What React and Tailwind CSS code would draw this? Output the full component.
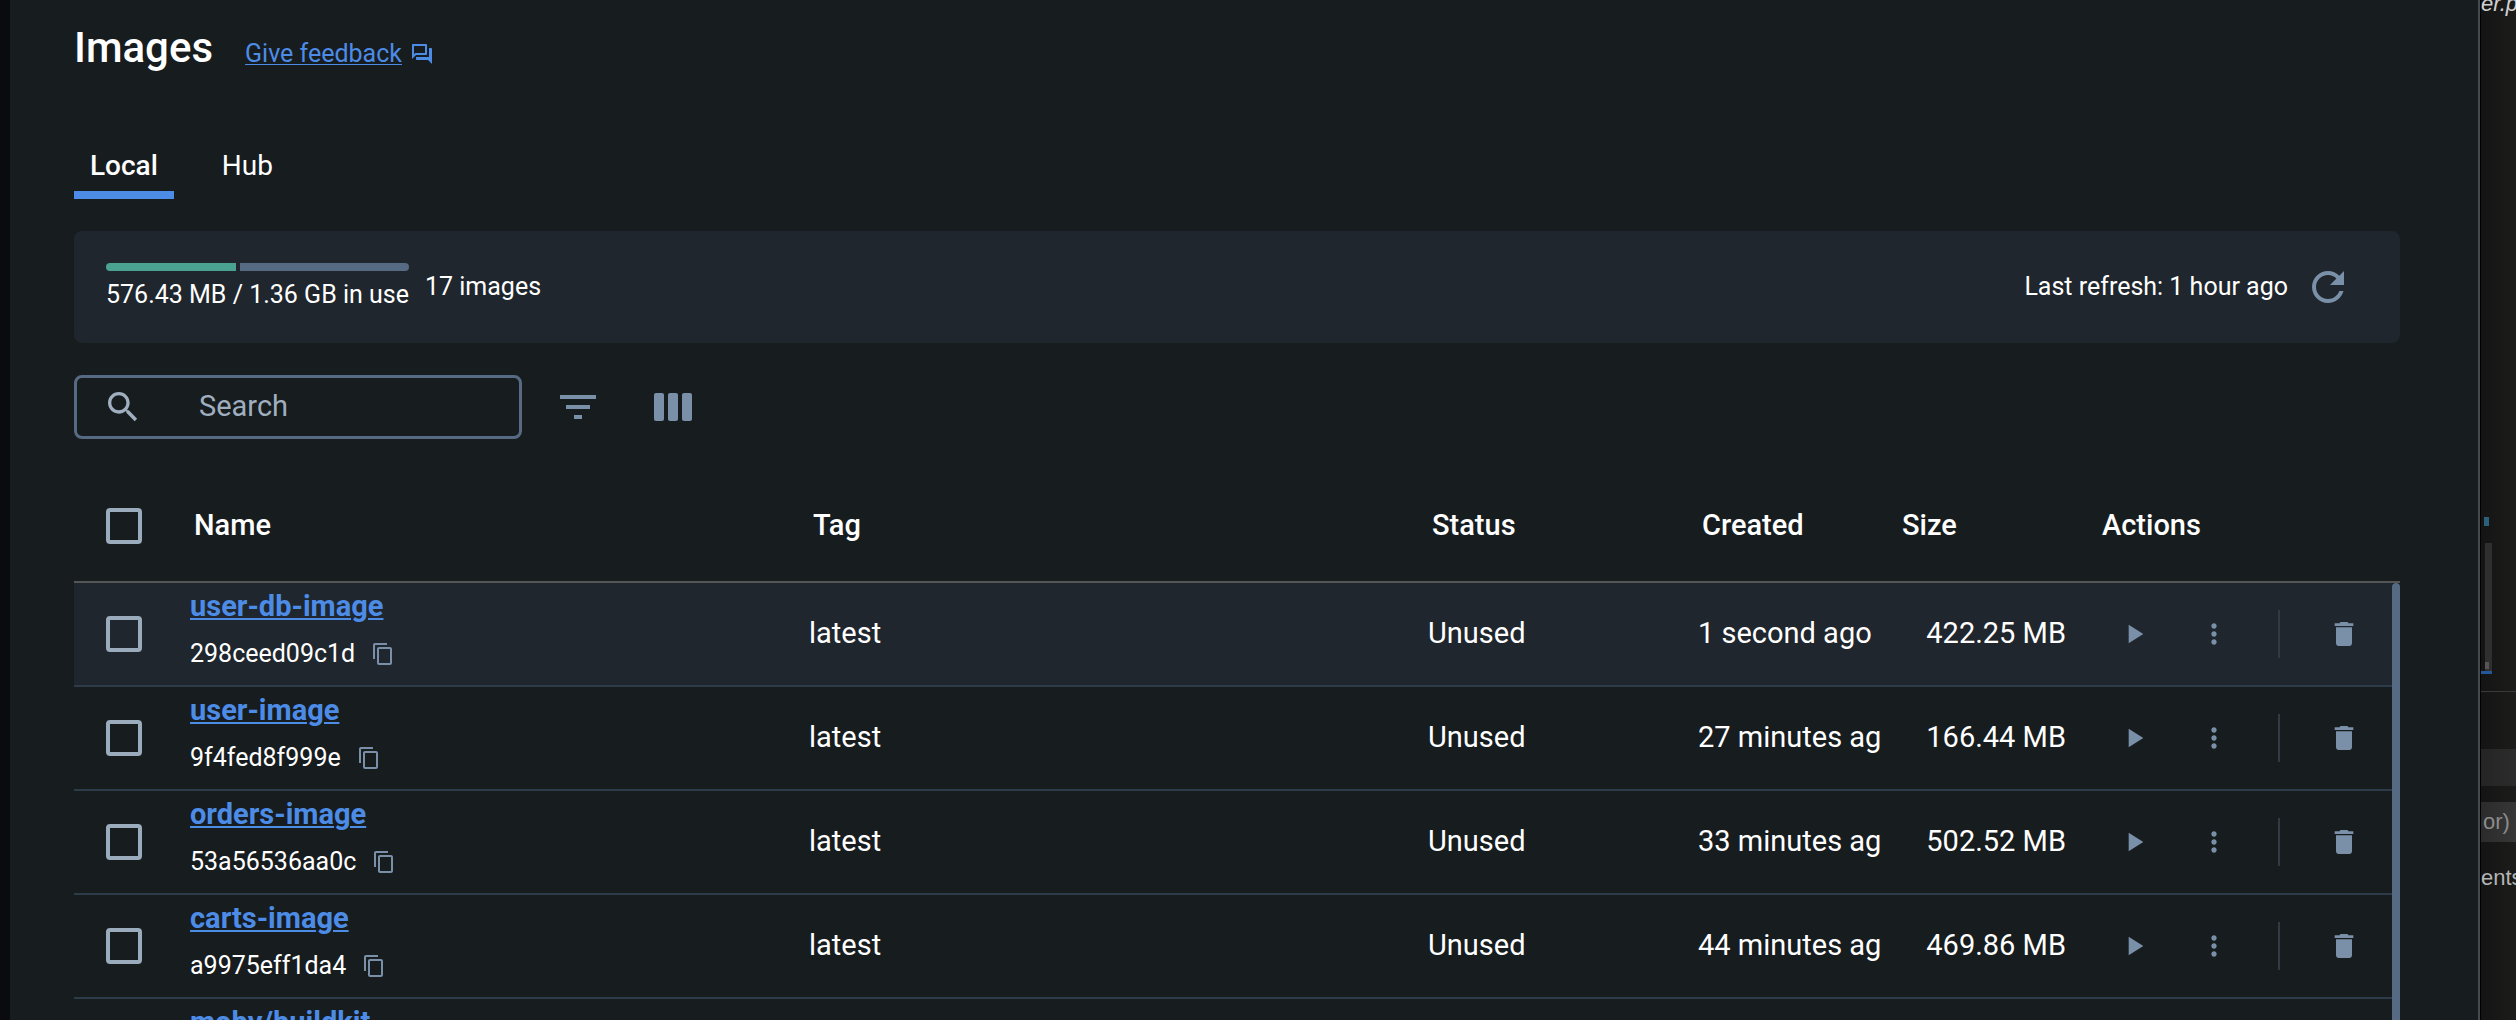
const rows = [
  { name: "user-db-image", id: "298ceed09c1d", created: "1 second ago", size: "422.25 MB", selected: true },
  { name: "user-image", id: "9f4fed8f999e", created: "27 minutes ag", size: "166.44 MB" },
  { name: "orders-image", id: "53a56536aa0c", created: "33 minutes ag", size: "502.52 MB" },
  { name: "carts-image", id: "a9975eff1da4", created: "44 minutes ag", size: "469.86 MB" },
  { name: "moby/buildkit" },
];

function Icon({ d, className }) {
  return (
    <svg viewBox="0 0 24 24" fill="currentColor" aria-hidden="true" className={className}>
      <path d={d} />
    </svg>
  );
}

const paths = {
  feedback:
    "M15 4v7H5.17L4 12.17V4h11m1-2H3c-.55 0-1 .45-1 1v14l4-4h10c.55 0 1-.45 1-1V3c0-.55-.45-1-1-1zm5 4h-2v9H6v2c0 .55.45 1 1 1h11l4 4V7c0-.55-.45-1-1-1z",
  refresh:
    "M17.65 6.35C16.2 4.9 14.21 4 12 4c-4.42 0-7.99 3.58-7.99 8s3.57 8 7.99 8c3.73 0 6.84-2.55 7.73-6h-2.08c-.82 2.33-3.04 4-5.65 4-3.31 0-6-2.69-6-6s2.69-6 6-6c1.66 0 3.14.69 4.22 1.78L13 11h7V4l-2.35 2.35z",
  search:
    "M15.5 14h-.79l-.28-.27C15.41 12.59 16 11.11 16 9.5 16 5.91 13.09 3 9.5 3S3 5.91 3 9.5 5.91 16 9.5 16c1.61 0 3.09-.59 4.23-1.57l.27.28v.79l5 4.99L20.49 19l-4.99-5zm-6 0C7.01 14 5 11.99 5 9.5S7.01 5 9.5 5 14 7.01 14 9.5 11.99 14 9.5 14z",
  filter: "M10 18h4v-2h-4v2zM3 6v2h18V6H3zm3 7h12v-2H6v2z",
  copy: "M16 1H4c-1.1 0-2 .9-2 2v14h2V3h12V1zm3 4H8c-1.1 0-2 .9-2 2v14c0 1.1.9 2 2 2h11c1.1 0 2-.9 2-2V7c0-1.1-.9-2-2-2zm0 16H8V7h11v14z",
  play: "M8 5v14l11-7z",
  more: "M12 8c1.1 0 2-.9 2-2s-.9-2-2-2-2 .9-2 2 .9 2 2 2zm0 2c-1.1 0-2 .9-2 2s.9 2 2 2 2-.9 2-2-.9-2-2-2zm0 6c-1.1 0-2 .9-2 2s.9 2 2 2 2-.9 2-2-.9-2-2-2z",
  trash: "M6 19c0 1.1.9 2 2 2h8c1.1 0 2-.9 2-2V7H6v12zM19 4h-3.5l-1-1h-5l-1 1H5v2h14V4z",
};

function ColumnsIcon() {
  return (
    <svg viewBox="0 0 48 48" fill="currentColor" aria-hidden="true" className="size-12">
      <rect x="4" y="10" width="10" height="28" rx="2" />
      <rect x="18" y="10" width="10" height="28" rx="2" />
      <rect x="32" y="10" width="10" height="28" rx="2" />
    </svg>
  );
}

function Checkbox({ label }) {
  return (
    <input
      type="checkbox"
      aria-label={label}
      className="block size-9 appearance-none rounded border-4 border-[#9aabbb] checked:bg-[#4d8ce6]"
    />
  );
}

function RowActions({ name }) {
  return (
    <div className="flex items-center gap-12 text-[#7a90a9]">
      <button type="button" aria-label={"Run " + name}>
        <Icon d={paths.play} className="size-8" />
      </button>
      <button type="button" aria-label={"More actions for " + name}>
        <Icon d={paths.more} className="size-8" />
      </button>
      <span className="h-12 w-0.5 bg-[#323a42]" />
      <button type="button" aria-label={"Delete " + name}>
        <Icon d={paths.trash} className="size-8" />
      </button>
    </div>
  );
}

function ImageRow({ row, first }) {
  return (
    <tr className={row.selected ? "bg-[#1f262d]" : ""}>
      <td className="h-[104px] border-b-2 border-[#2d3b4b] pl-8">
        {row.id && <Checkbox label={"Select " + row.name} />}
      </td>
      <td className="border-b-2 border-[#2d3b4b] px-4 align-top">
        <a
          href="#image"
          className="block w-fit leading-[46px] font-bold text-[#4d8ce6] underline decoration-2 underline-offset-2"
        >
          {row.name}
        </a>
        {row.id && (
          <div className="flex items-center gap-4 pt-[11px] text-[25px] leading-7">
            {row.id}
            <button type="button" aria-label={"Copy id of " + row.name} className="text-[#7a90a9]">
              <Icon d={paths.copy} className="size-6" />
            </button>
          </div>
        )}
      </td>
      <td className="border-b-2 border-[#2d3b4b] px-4">{row.id && "latest"}</td>
      <td className="border-b-2 border-[#2d3b4b] px-4">{row.id && "Unused"}</td>
      <td className="border-b-2 border-[#2d3b4b] pl-4 whitespace-nowrap">{row.created}</td>
      <td className="border-b-2 border-[#2d3b4b] px-4 text-right whitespace-nowrap">{row.size}</td>
      <td className="border-b-2 border-[#2d3b4b] pl-9">{row.id && <RowActions name={row.name} />}</td>
      {first && (
        <td rowSpan={rows.length} className="bg-[#171c1f] p-0 align-top">
          <div className="h-[520px] rounded-t bg-[#566b83]" />
        </td>
      )}
    </tr>
  );
}

function BackgroundWindow() {
  return (
    <aside className="flex w-9 shrink-0 flex-col overflow-hidden border-l border-black bg-linear-to-r from-[#141414] to-[#1c1c1b] font-['Liberation_Sans',sans-serif] text-[22px] whitespace-nowrap">
      <div className="-mt-3 h-9 leading-8 text-[#d0d0d0] italic">er.p</div>
      <div className="mt-[493px] ml-[3px] h-[9px] w-[5px] bg-[#2c5f7c]" />
      <div className="mt-[17px] ml-1 flex h-32 w-[7px] items-end bg-[#2f2f2f] pb-0.5">
        <div className="h-[7px] w-1 bg-[#555]" />
      </div>
      <div className="h-[3px] w-[11px] bg-[#24579a]" />
      <div className="mt-[17px] h-px bg-[#3a3a3a]" />
      <div className="mt-[57px] h-[37px] bg-linear-to-r from-[#242424] to-[#2c2c2c]" />
      <div className="mt-4 h-10 bg-linear-to-r from-[#2b2b2b] to-[#373737] pl-0.5 leading-10 text-[#8b8b8b]">or)</div>
      <div className="mt-4 leading-10 text-[#b4b4b4]">ents</div>
    </aside>
  );
}

export default function App() {
  return (
    <div className="flex h-screen overflow-hidden bg-[#090b0e] pl-2.5 font-[Roboto,sans-serif] text-white">
      <main className="min-w-0 flex-1 border-r-2 border-[#444a4d] bg-[#171c1f] pr-[78px] pl-16">
        <header className="flex items-baseline gap-8 pt-5">
          <h1 className="text-[42px] leading-[56px] font-medium">Images</h1>
          <a href="#feedback" className="flex items-center gap-2 text-[25px] leading-8 text-[#4d8ce6]">
            <span className="underline decoration-1 underline-offset-2">Give feedback</span>
            <Icon d={paths.feedback} className="size-6" />
          </a>
        </header>

        <nav role="tablist" className="mt-[59px] flex text-[28px]">
          <button
            type="button"
            role="tab"
            aria-selected="true"
            className="h-16 border-b-8 border-[#4d8ce6] px-4 pt-1.5 leading-8 font-medium"
          >
            Local
          </button>
          <button
            type="button"
            role="tab"
            aria-selected="false"
            className="ml-8 h-16 border-b-8 border-transparent px-4 pt-1.5 leading-8"
          >
            Hub
          </button>
        </nav>

        <section className="mt-8 flex h-28 items-center rounded-lg bg-[#1f262d] pr-12 pl-8 text-[25px]">
          <div>
            <div className="flex h-2 gap-1 overflow-hidden rounded-full">
              <div className="w-[43%] bg-[#4aa391]" />
              <div className="flex-1 bg-[#566b83]" />
            </div>
            <p className="pt-2 leading-8">576.43 MB / 1.36 GB in use</p>
          </div>
          <p className="ml-4">17 images</p>
          <p className="ml-auto">Last refresh: 1 hour ago</p>
          <button type="button" aria-label="Refresh" className="ml-4 text-[#7a90a9]">
            <Icon d={paths.refresh} className="size-12" />
          </button>
        </section>

        <div className="mt-8 flex items-center text-[#7a90a9]">
          <label className="flex h-16 w-[448px] items-center rounded-lg border-[3px] border-[#566b83] pl-[26px] text-[#a0afbf]">
            <Icon d={paths.search} className="size-10 shrink-0" />
            <input
              type="text"
              aria-label="Search"
              placeholder="Search"
              className="ml-14 min-w-0 flex-1 bg-transparent text-[29px] outline-none placeholder:text-[#a0afbf]"
            />
          </label>
          <button type="button" aria-label="Filter" className="ml-8">
            <Icon d={paths.filter} className="size-12" />
          </button>
          <button type="button" aria-label="Columns" className="ml-12">
            <ColumnsIcon />
          </button>
        </div>

        <table className="mt-8 w-full table-fixed border-separate border-spacing-0 text-[29px]">
          <colgroup>
            <col className="w-[100px]" />
            <col />
            <col />
            <col className="w-[270px]" />
            <col className="w-[200px]" />
            <col className="w-[200px]" />
            <col className="w-[310px]" />
            <col className="w-2" />
          </colgroup>
          <thead>
            <tr className="text-left">
              <th className="h-28 border-b-2 border-[#555555] pl-8">
                <Checkbox label="Select all images" />
              </th>
              {["Name", "Tag", "Status", "Created", "Size", "Actions"].map((title) => (
                <th key={title} scope="col" className="border-b-2 border-[#555555] pl-5 font-medium">
                  {title}
                </th>
              ))}
              <td className="border-b-2 border-[#555555]" />
            </tr>
          </thead>
          <tbody>
            {rows.map((row, i) => (
              <ImageRow key={row.name} row={row} first={i === 0} />
            ))}
          </tbody>
        </table>
      </main>
      <BackgroundWindow />
    </div>
  );
}
